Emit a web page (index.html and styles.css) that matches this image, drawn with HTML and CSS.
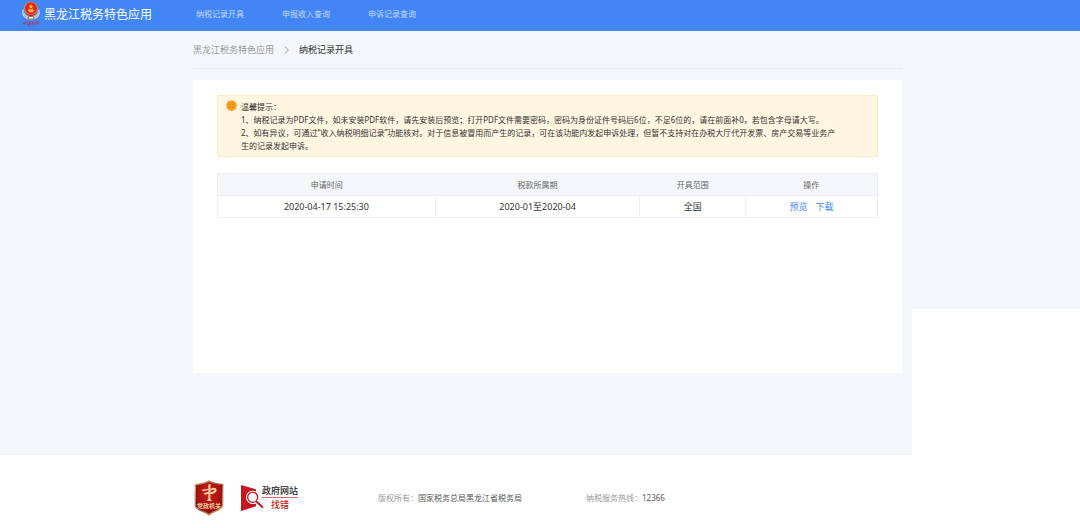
FILE: index.html
```html
<!DOCTYPE html>
<html lang="zh-CN">
<head>
  <meta charset="UTF-8">
  <title>纳税记录开具</title>
  <link rel="stylesheet" href="styles.css">
</head>
<body>
  <header class="header">
    <div class="brand">
      <svg class="brand-logo" viewBox="0 0 60 75">
        <path d="M7 22 Q-1 38 9 48 Q17 57 30 58 Q43 57 51 48 Q61 38 53 22 Q54 38 40 43 L20 43 Q6 38 7 22Z" fill="#d5d8de"/>
        <path d="M5 32 Q9 43 20 46 M55 32 Q51 43 40 46 M10 44 Q17 51 26 52 M50 44 Q43 51 34 52" fill="none" stroke="#8d95a3" stroke-width="2"/>
        <path d="M22 44 L38 44 L42 58 L18 58Z" fill="#8b8189"/>
        <path d="M24 48 L36 48 L36 53 L24 53Z" fill="#f0e4cf"/>
        <circle cx="30" cy="22" r="20" fill="#ef9a3c"/>
        <circle cx="30" cy="22" r="18" fill="#e2261a"/>
        <path d="M30 8 L32 14 L38 14 L33 18 L35 24 L30 20 L25 24 L27 18 L22 14 L28 14Z" fill="#ffc83c"/>
        <path d="M20 29 L23 25 L37 25 L40 29 L37 31 L37 34 L23 34 L23 31Z" fill="#f6b13a"/>
        <path d="M15 37 Q30 46 45 37 L42 43 Q30 48 18 43Z" fill="#c71f18"/>
        <text class="logo-text" x="30" y="73" text-anchor="middle">中国税务</text>
      </svg>
      <span class="brand-name">黑龙江税务特色应用</span>
    </div>
    <nav class="nav">
      <a href="#">纳税记录开具</a>
      <a href="#">申报收入查询</a>
      <a href="#">申诉记录查询</a>
    </nav>
  </header>

  <main class="main">
    <div class="breadcrumb">
      <a href="#">黑龙江税务特色应用</a>
      <svg class="arrow" viewBox="0 0 5 8"><path d="M1 0.5 L4.3 4 L1 7.5" fill="none" stroke="#999" stroke-width="0.9"/></svg>
      <span class="current">纳税记录开具</span>
    </div>

    <section class="card">
      <div class="notice">
        <svg class="smile" viewBox="0 0 20 20">
          <circle cx="10" cy="10" r="9.5" fill="#f89c1c"/>
          <circle cx="6.5" cy="8" r="1.2" fill="#d07a08"/>
          <circle cx="13.5" cy="8" r="1.2" fill="#d07a08"/>
          <path d="M5 12 Q10 17 15 12" fill="none" stroke="#d07a08" stroke-width="1.3"/>
        </svg>
        <div class="notice-text">
          <p>温馨提示：</p>
          <p>1、纳税记录为PDF文件，如未安装PDF软件，请先安装后预览；打开PDF文件需要密码，密码为身份证件号码后6位，不足6位的，请在前面补0，若包含字母请大写。</p>
          <p>2、如有异议，可通过“收入纳税明细记录”功能核对。对于信息被冒用而产生的记录，可在该功能内发起申诉处理，但暂不支持对在办税大厅代开发票、房产交易等业务产<br>生的记录发起申诉。</p>
        </div>
      </div>

      <table class="records">
        <thead>
          <tr>
            <th class="col-time">申请时间</th>
            <th class="col-period">税款所属期</th>
            <th class="col-range">开具范围</th>
            <th class="col-action">操作</th>
          </tr>
        </thead>
        <tbody>
          <tr>
            <td>2020-04-17 15:25:30</td>
            <td>2020-01至2020-04</td>
            <td>全国</td>
            <td><div class="actions"><a href="#">预览</a><a href="#">下载</a></div></td>
          </tr>
        </tbody>
      </table>
    </section>

    <div class="corner"></div>
  </main>

  <footer class="footer">
    <svg class="shield" viewBox="0 0 90 108">
      <defs>
        <linearGradient id="gold" x1="0" y1="0" x2="1" y2="1">
          <stop offset="0" stop-color="#d9b58a"/>
          <stop offset="0.5" stop-color="#9a5a38"/>
          <stop offset="1" stop-color="#e3bd88"/>
        </linearGradient>
        <radialGradient id="red" cx="0.5" cy="0.35" r="0.7">
          <stop offset="0" stop-color="#d8201c"/>
          <stop offset="1" stop-color="#860a0a"/>
        </radialGradient>
      </defs>
      <path d="M45 1 Q63 11 88 12 L88 76 Q87 87 70 94 Q54 99 45 107 Q36 99 20 94 Q3 87 2 76 L2 12 Q27 11 45 1Z" fill="url(#gold)"/>
      <path d="M45 6 Q63 15 84 16 L84 75 Q83 84 68 90 Q53 95 45 101 Q37 95 22 90 Q7 84 6 75 L6 16 Q27 15 45 6Z" fill="url(#red)"/>
      <path d="M43 13 L50 13 L49 26 Q66 20 68 29 Q68 40 49 43 L49 57 L54 63 L37 63 L43 57 L43 41 L34 44 L28 40 L43 35 L43 30 L27 34 L23 29 L43 26Z M49 32 L49 37 Q61 34 61 30 Q58 28 49 32Z" fill="#f3cd9a" fill-rule="evenodd"/>
      <text class="shield-text" x="45" y="85" text-anchor="middle">党政机关</text>
    </svg>

    <a class="find-error" href="#">
      <svg class="find-icon" viewBox="0 0 72 78">
        <path d="M3 0 L48 13 L48 64 L3 78Z" fill="#c5161d"/>
        <circle cx="38" cy="37" r="20" fill="#fff"/>
        <circle cx="38" cy="37" r="15" fill="#fff" stroke="#c5161d" stroke-width="4"/>
        <path d="M48 49 L64 65" stroke="#fff" stroke-width="12"/>
        <path d="M50 50 L67 66" stroke="#c5161d" stroke-width="6" stroke-linecap="round"/>
      </svg>
      <span class="find-text">
        <span class="find-top">政府网站</span>
        <span class="find-bottom">找错</span>
      </span>
    </a>

    <p class="copyright">版权所有：<span>国家税务总局黑龙江省税务局</span></p>
    <p class="hotline">纳税服务热线：<span>12366</span></p>
  </footer>
</body>
</html>
```

FILE: styles.css
```css
* {
  box-sizing: border-box;
}

body {
  margin: 0;
  background-color: #fff;
  color: #333;
  font-family: "Noto Sans", "Noto Sans CJK SC", sans-serif;
  font-size: 8px;
}

p {
  margin: 0;
}

a {
  text-decoration: none;
}

.header {
  display: flex;
  align-items: center;
  height: 31px;
  padding-bottom: 4px;
  background-color: #4285f5;
}

.brand {
  display: flex;
  align-items: center;
  gap: 3px;
  width: 196px;
  padding-left: 21px;
}

.brand-logo {
  width: 20px;
  height: 25px;
}

.logo-text {
  font-size: 13px;
  font-style: italic;
  fill: #b32a3c;
}

.brand-name {
  font-size: 12px;
  color: #fff;
}

.nav {
  display: flex;
  gap: 38px;
}

.nav a {
  color: #c6dafc;
}

.main {
  position: relative;
  min-height: 424px;
  padding: 0 178px 82px 193px;
  background-color: #f4f6fa;
}

.breadcrumb {
  display: flex;
  align-items: center;
  gap: 10px;
  height: 38px;
  border-bottom: 1px solid #e6e8ec;
  font-size: 9px;
}

.breadcrumb a {
  color: #999;
}

.arrow {
  width: 5px;
  height: 8px;
}

.card {
  min-height: 293px;
  margin-top: 11px;
  padding: 15px 24px;
  background-color: #fff;
}

.notice {
  display: flex;
  gap: 4px;
  padding: 4px 8px;
  border: 1px solid #fbe8c8;
  border-radius: 2px;
  background-color: #fff5e1;
}

.smile {
  flex: none;
  width: 11px;
  height: 11px;
}

.notice-text {
  line-height: 13px;
}

.records {
  width: 100%;
  margin-top: 16px;
  border-collapse: collapse;
  table-layout: fixed;
  text-align: center;
}

.records th,
.records td {
  height: 22px;
  padding: 0;
}

.records thead {
  border: 1px solid #eceef2;
}

.records th {
  background-color: #f4f6fa;
  color: #666;
  font-weight: normal;
}

.records td {
  border: 1px solid #eceef2;
  font-size: 9px;
}

.col-time {
  width: 33%;
}

.col-period {
  width: 31%;
}

.col-range {
  width: 16%;
}

.col-action {
  width: 20%;
}

.actions {
  display: flex;
  justify-content: center;
  gap: 8px;
}

.actions a {
  color: #4285f5;
}

/* white block over the lower right of the page */
.corner {
  position: absolute;
  right: 0;
  bottom: 0;
  width: 168px;
  height: 146px;
  background-color: #fff;
}

.footer {
  display: flex;
  align-items: center;
  height: 73px;
  padding: 12px 0 0 194px;
  color: #999;
}

.footer p span {
  color: #555;
}

.shield {
  width: 30px;
  height: 36px;
}

.shield-text {
  font-size: 18px;
  font-weight: bold;
  fill: #f3cd9a;
}

.find-error {
  display: flex;
  align-items: center;
  margin-left: 16px;
}

.find-icon {
  width: 24px;
  height: 26px;
}

.find-text {
  display: flex;
  flex-direction: column;
  width: 36px;
  margin-left: -2px;
  font-size: 9px;
  font-weight: 500;
  line-height: 13px;
  text-align: center;
}

.find-top {
  border-bottom: 1px solid #d86a6e;
  color: #222;
}

.find-bottom {
  color: #c5161d;
}

.copyright {
  margin-left: 80px;
}

.hotline {
  margin-left: 64px;
}
```
